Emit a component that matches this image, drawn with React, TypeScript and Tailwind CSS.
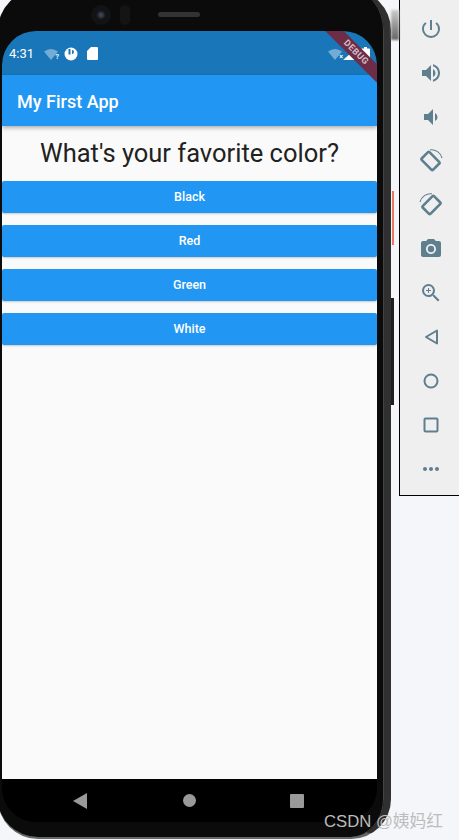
import React from 'react';
import { MdPowerSettingsNew, MdVolumeUp, MdVolumeDown, MdPhotoCamera, MdZoomIn, MdMoreHoriz } from 'react-icons/md';

const answers = ['Black', 'Red', 'Green', 'White'];

// emulator side panel icons that the icon packs don't have
const RotateIcon = ({ flip }: { flip?: boolean }) => (
  <svg width="24" height="24" viewBox="0 0 24 24" className={flip ? '-scale-x-100' : ''}>
    <rect x="3.5" y="6.5" width="16" height="11" rx="1" transform="rotate(45 11.5 12)" fill="none" stroke="#5f7f8f" strokeWidth="2.6" />
    <path d="M11 0.8 A11 11 0 0 1 23 9" fill="none" stroke="#5f7f8f" strokeWidth="1.1" />
  </svg>
);

const BackIcon = () => (
  <svg width="24" height="24" viewBox="0 0 24 24">
    <path d="M18 5.5 V18.5 L7 12 Z" fill="none" stroke="#5f7f8f" strokeWidth="2" strokeLinejoin="round" />
  </svg>
);

const CircleIcon = () => (
  <svg width="24" height="24" viewBox="0 0 24 24">
    <circle cx="12" cy="12" r="6.5" fill="none" stroke="#5f7f8f" strokeWidth="2" />
  </svg>
);

const SquareIcon = () => (
  <svg width="24" height="24" viewBox="0 0 24 24">
    <rect x="5.5" y="5.5" width="13" height="13" rx="1" fill="none" stroke="#5f7f8f" strokeWidth="2" />
  </svg>
);

const WifiIcon = ({ mark }: { mark: string }) => (
  <div className="relative w-[14px] h-[12px]">
    <svg width="14" height="12" viewBox="0 0 14 12">
      <path d="M0 3.5 Q7 -1.5 14 3.5 L7 12 Z" fill="#ffffff" fillOpacity="0.4" />
    </svg>
    <span className="absolute right-[-1px] bottom-[-1px] text-[7px] leading-[8px] font-bold text-white">{mark}</span>
  </div>
);

const StatusBar = () => (
  <div className="h-[44px] bg-[#1976b8] flex items-center pl-[7px] pr-[7px] pt-[1px] text-white">
    <span className="text-[13px] w-[35px]">4:31</span>
    <WifiIcon mark="?" />
    <svg width="14" height="14" viewBox="0 0 14 14" className="ml-[6px]">
      <circle cx="7" cy="7" r="6.5" fill="#ffffff" />
      <path d="M4.5 2 H6.5 V7.5 H4.5 Z M8 3 A2 2 0 0 1 8 7 Z" fill="#1976b8" />
    </svg>
    <svg width="11" height="13" viewBox="0 0 11 13" className="ml-[9px]">
      <path d="M4 0 H10 A1 1 0 0 1 11 1 V12 A1 1 0 0 1 10 13 H1 A1 1 0 0 1 0 12 V4 Z" fill="#ffffff" />
    </svg>
    <div className="ml-auto flex items-center">
      <WifiIcon mark="×" />
      <svg width="15" height="13" viewBox="0 0 15 13" className="ml-[1px]">
        <path d="M15 0 V13 H0 Z" fill="#ffffff" />
      </svg>
      <svg width="9" height="14" viewBox="0 0 9 14" className="ml-[3px]">
        <path d="M3 0 H6 V1.5 H8 A1 1 0 0 1 9 2.5 V13 A1 1 0 0 1 8 14 H1 A1 1 0 0 1 0 13 V2.5 A1 1 0 0 1 1 1.5 H3 Z" fill="#ffffff" />
      </svg>
    </div>
  </div>
);

const SidePanel = () => (
  <div className="w-[60px] h-[496px] shrink-0 bg-[#efefef] border-l border-b border-black pt-[7px] pl-[2px] flex flex-col items-center text-[#5f7f8f]">
    <div className="h-11 flex items-center justify-center"><MdPowerSettingsNew size={24} /></div>
    <div className="h-11 flex items-center justify-center"><MdVolumeUp size={24} /></div>
    <div className="h-11 flex items-center justify-center"><MdVolumeDown size={24} /></div>
    <div className="h-11 flex items-center justify-center"><RotateIcon /></div>
    <div className="h-11 flex items-center justify-center"><RotateIcon flip /></div>
    <div className="h-11 flex items-center justify-center"><MdPhotoCamera size={24} /></div>
    <div className="h-11 flex items-center justify-center"><MdZoomIn size={24} /></div>
    <div className="h-11 flex items-center justify-center"><BackIcon /></div>
    <div className="h-11 flex items-center justify-center"><CircleIcon /></div>
    <div className="h-11 flex items-center justify-center"><SquareIcon /></div>
    <div className="h-11 flex items-center justify-center"><MdMoreHoriz size={24} /></div>
  </div>
);

const App = () => {
  return (
    <div className="relative w-[459px] h-[840px] overflow-hidden bg-[#f5f6f9] flex font-['Roboto',sans-serif]">
      {/* phone */}
      <div className="relative -ml-[2px] -mt-[10px] w-[393px] h-[849px] shrink-0 rounded-[40px] bg-[#0b0b0b] border-r-[7px] border-b-2 border-r-[#303030] border-b-[#666] shadow-[inset_-1px_0_0_#444] flex flex-col pl-[4px] pr-[7px]">
        <div className="h-[41px] shrink-0 flex items-center pt-[8px]">
          <div className="ml-[89px] w-[20px] h-[20px] rounded-full bg-[#131316] flex items-center justify-center">
            <div className="w-[6px] h-[6px] rounded-full bg-[#3d4654] blur-[1px]" />
          </div>
          <div className="ml-[9px] w-[10px] h-[20px] rounded-full bg-[#141414]" />
          <div className="ml-[28px] w-[42px] h-[5px] rounded-full bg-[#333333] blur-[0.5px]" />
        </div>
        <div className="relative flex-1 mb-[15px] rounded-[34px] overflow-hidden bg-black flex flex-col">
          <StatusBar />
          <div className="h-[51px] shrink-0 bg-[#2196f3] shadow-[0_2px_4px_rgba(0,0,0,0.3)] z-[5] flex items-center pl-[15px] pt-[2px] text-white text-[18px] font-medium">
            My First App
          </div>
          <div className="h-[653px] shrink-0 bg-[#fafafa] flex flex-col">
            <div className="h-[54.7px] flex items-center justify-center text-[25.5px] text-[#212121]">
              What's your favorite color?
            </div>
            <div className="flex flex-col gap-[12px]">
              {answers.map((answer) => (
                <button
                  key={answer}
                  className="h-[32px] w-full pt-[2px] bg-[#2196f3] rounded-[2px] shadow-[0_1px_2px_rgba(0,0,0,0.2)] text-white text-[12.5px] font-medium"
                >
                  {answer}
                </button>
              ))}
            </div>
          </div>
          <div className="flex-1 flex items-start pl-[71px] pt-[14px]">
            <svg width="14" height="16" viewBox="0 0 14 16"><path d="M14 0 V16 L0 8 Z" fill="#999999" /></svg>
            <div className="w-[13px] h-[13px] mt-[1px] ml-[96px] rounded-full bg-[#999999]" />
            <div className="w-[14px] h-[14px] mt-[1px] ml-[94px] rounded-[1px] bg-[#999999]" />
          </div>
          <div className="absolute -right-[29px] top-[15px] z-10 w-[100px] h-[13px] rotate-45 bg-[#6e2d47] flex items-center justify-center text-[9px] font-bold text-[#d3bcc6] tracking-[0.5px]">
            DEBUG
          </div>
        </div>
      </div>
      {/* side buttons of the phone */}
      <div className="absolute left-[391px] top-[298px] w-[3px] h-[107px] bg-[#1f1f1f]" />
      <div className="absolute left-[392px] top-[191px] w-[2px] h-[54px] bg-[#e8795e]" />
      <div className="absolute left-[391px] top-[10px] w-[8px] h-[30px] bg-gradient-to-b from-[#cccccc] to-[#666666] blur-[1px]" />
      <div className="ml-[8px]">
        <SidePanel />
      </div>
      {/* watermark */}
      <div className="absolute left-[324px] top-[812px] text-[16.7px] leading-[20px] text-[#bcbcbc] whitespace-nowrap font-['Liberation_Sans','Noto_Sans_CJK_SC',sans-serif]">
        CSDN @姨妈红
      </div>
    </div>
  );
};

export default App;
